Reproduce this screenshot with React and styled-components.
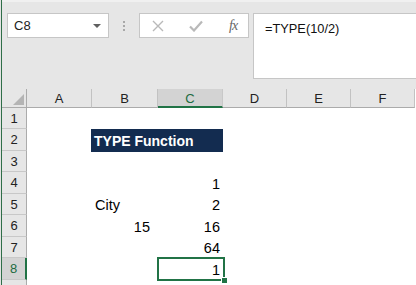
import React from "react";
import styled, { createGlobalStyle } from "styled-components";

const Global = createGlobalStyle`
  html, body { margin: 0; padding: 0; background: #fff; }
  body { font-family: "Liberation Sans", Arial, sans-serif; }
`;

const Frame = styled.div`
  width: 416px;
  height: 285px;
  overflow: hidden;
  border-left: 1px solid #e3e3e3;
  box-sizing: border-box;
`;

const Inner = styled.div`
  height: 100%;
  border-left: 1px solid #2f6e48;
  display: flex;
  flex-direction: column;
`;

const Toolbar = styled.div`
  height: 89px;
  flex: none;
  background: #e6e6e6;
  border-top: 2px solid #f0f0f0;
  box-sizing: border-box;
  display: flex;
  align-items: flex-start;
  padding: 11px 0 0 5px;
`;

const NameBox = styled.div`
  width: 102px;
  height: 25px;
  box-sizing: border-box;
  background: #fff;
  border: 1px solid #c6c6c6;
  display: flex;
  align-items: center;
  justify-content: space-between;
  padding: 0 7px 0 6px;
  font-size: 13px;
  color: #222;
`;

const Caret = styled.span`
  width: 0;
  height: 0;
  border-left: 4px solid transparent;
  border-right: 4px solid transparent;
  border-top: 4px solid #5f5f5f;
`;

const Dots = styled.div`
  width: 30px;
  height: 25px;
  display: flex;
  flex-direction: column;
  align-items: center;
  justify-content: center;
  gap: 2px;
  & > i {
    width: 2px;
    height: 2px;
    background: #a8a8a8;
  }
`;

const ButtonBox = styled.div`
  width: 110px;
  height: 25px;
  box-sizing: border-box;
  background: #fff;
  border: 1px solid #c6c6c6;
  display: flex;
  align-items: center;
  padding-left: 12px;
  gap: 25px;
`;

const Fx = styled.span`
  font-family: "Liberation Serif", "Times New Roman", serif;
  font-style: italic;
  font-size: 14px;
  color: #666;
  letter-spacing: -1px;
  margin-left: 1px;
`;

const FormulaBar = styled.div`
  flex: 1;
  margin-left: 4px;
  height: 66px;
  box-sizing: border-box;
  background: #fff;
  border: 1px solid #c6c6c6;
  border-right: none;
  padding: 7px 0 0 11px;
  font-size: 12.8px;
  color: #111;
`;

const Grid = styled.div`
  display: grid;
  grid-template-columns: 25px 65px 66px 65px 64px 64px 64px;
  grid-template-rows: 19px 21px 22px 21px 22px 21px 22px 21px 22px 21px;
  position: relative;
  background: #fff;
`;

const ColHead = styled.div`
  background: ${(p) => (p.$sel ? "#d3d3d3" : "#e6e6e6")};
  border-right: 1px solid ${(p) => (p.$sel ? "#c8c8c8" : "#c2c2c2")};
  border-bottom: ${(p) => (p.$sel ? "2px solid #217346" : "1px solid #ababab")};
  box-sizing: border-box;
  display: flex;
  align-items: center;
  justify-content: center;
  font-size: 13px;
  color: ${(p) => (p.$sel ? "#1d6b40" : "#222")};
  padding-top: ${(p) => (p.$sel ? "1px" : "0")};
`;

const Corner = styled.div`
  background: #e6e6e6;
  border-right: 1px solid #ababab;
  border-bottom: 1px solid #ababab;
  box-sizing: border-box;
  display: flex;
  align-items: flex-end;
  justify-content: flex-end;
  padding: 0 2px 2px 0;
`;

const RowHead = styled.div`
  background: ${(p) => (p.$sel ? "#d3d3d3" : "#e6e6e6")};
  border-right: ${(p) => (p.$sel ? "2px solid #217346" : "1px solid #ababab")};
  border-bottom: 1px solid #c8c8c8;
  box-sizing: border-box;
  display: flex;
  align-items: center;
  justify-content: center;
  font-size: 13px;
  color: ${(p) => (p.$sel ? "#1d6b40" : "#222")};
`;

const Cell = styled.div`
  box-sizing: border-box;
  display: flex;
  align-items: flex-end;
  justify-content: ${(p) => (p.$right ? "flex-end" : "flex-start")};
  padding: 0 ${(p) => p.$pr || 3}px 2px 3px;
  font-size: 14.5px;
  color: #000;
  white-space: nowrap;
  overflow: visible;
`;

const Banner = styled.div`
  grid-column: 3 / span 2;
  background: #132c50;
  color: #fff;
  font-weight: bold;
  font-size: 14px;
  display: flex;
  align-items: center;
  padding: 1px 0 0 3px;
  margin-left: -1px;
  margin-bottom: -1px;
`;

const Selection = styled.div`
  position: absolute;
  border: 2px solid #217346;
  box-sizing: border-box;
  pointer-events: none;
  &::after {
    content: "";
    position: absolute;
    right: -4px;
    bottom: -4px;
    width: 5px;
    height: 5px;
    background: #217346;
    border: 1px solid #fff;
    border-right: none;
    border-bottom: none;
  }
`;

const cols = ["A", "B", "C", "D", "E", "F"];
const data = {
  4: { C: { t: "1" } },
  5: { B: { t: "City", left: true }, C: { t: "2" } },
  6: { B: { t: "15", pr: 8 }, C: { t: "16" } },
  7: { C: { t: "64" } },
  8: { C: { t: "1" } },
};

export default function App() {
  const rows = [];
  for (let r = 1; r <= 9; r++) {
    rows.push(
      <RowHead key={"h" + r} $sel={r === 8}>
        {r <= 8 ? r : ""}
      </RowHead>
    );
    if (r === 2) {
      rows.push(<Cell key="2A" />);
      rows.push(<Banner key="2B">TYPE Function</Banner>);
      rows.push(<Cell key="2D" />, <Cell key="2E" />, <Cell key="2F" />);
      continue;
    }
    cols.forEach((c) => {
      const v = (data[r] && data[r][c]) || {};
      rows.push(
        <Cell key={r + c} $right={!v.left} $pr={v.pr}>
          {v.t || ""}
        </Cell>
      );
    });
  }

  return (
    <Frame>
      <Global />
      <Inner>
        <Toolbar>
          <NameBox>
            <span>C8</span>
            <Caret />
          </NameBox>
          <Dots>
            <i />
            <i />
            <i />
          </Dots>
          <ButtonBox>
            <svg width="12" height="12" viewBox="0 0 12 12">
              <path d="M1 1L11 11M11 1L1 11" stroke="#b9b9b9" strokeWidth="1.4" fill="none" />
            </svg>
            <svg width="14" height="12" viewBox="0 0 14 12">
              <path d="M1 6.5L5 10.5L13 1.5" stroke="#b9b9b9" strokeWidth="2.2" fill="none" />
            </svg>
            <Fx>fx</Fx>
          </ButtonBox>
          <FormulaBar>=TYPE(10/2)</FormulaBar>
        </Toolbar>
        <Grid>
          <Corner>
            <svg width="11" height="11" viewBox="0 0 11 11">
              <path d="M11 0L11 11L0 11Z" fill="#b4b4b4" />
            </svg>
          </Corner>
          {cols.map((c) => (
            <ColHead key={c} $sel={c === "C"}>
              {c}
            </ColHead>
          ))}
          {rows}
          <Selection style={{ left: 155, top: 168, width: 68, height: 24 }} />
        </Grid>
      </Inner>
    </Frame>
  );
}
